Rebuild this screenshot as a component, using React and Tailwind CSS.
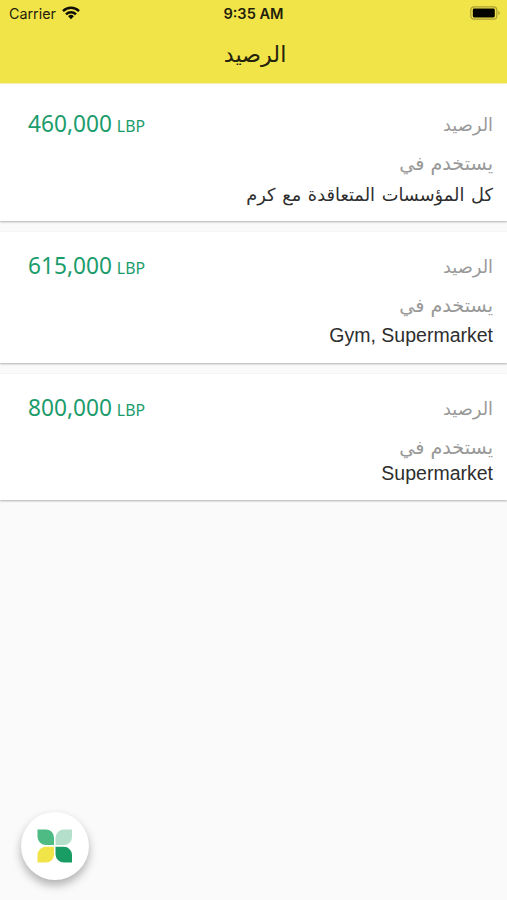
import React from 'react'

const balances = [
  {
    amount: '460,000',
    places: 'كل المؤسسات المتعاقدة مع كرم',
    card: 'h-[137px] pt-[21px]',
    text: "h-[30px] text-[17.8px] [word-spacing:1px] font-['DejaVu_Sans','Noto_Sans',sans-serif]",
  },
  {
    amount: '615,000',
    places: 'Gym, Supermarket',
    card: 'h-[131px] pt-[15px]',
    text: "h-[26px] pt-[2px] text-[19.5px] font-['Liberation_Sans',sans-serif]",
  },
  {
    amount: '800,000',
    places: 'Supermarket',
    card: 'h-[126px] pt-[15px]',
    text: "h-[18px] pt-[2px] text-[19.5px] font-['Liberation_Sans',sans-serif]",
  },
]

function StatusBar() {
  return (
    <div className="grid h-7 grid-cols-3 items-center pl-[9px] pr-[7px] font-['Inter',sans-serif] text-[14.3px] leading-none text-[#1f1e0c]">
      <div className="flex items-center gap-[6px]">
        <span>Carrier</span>
        <svg width="18" height="14" viewBox="0 0 18 14" fill="none" stroke="#111006" strokeWidth="2.5" className="-mt-[2px]">
          <path d="M1 5.1a11.5 11.5 0 0 1 16 0" />
          <path d="M4 8.3a7.2 7.2 0 0 1 10 0" />
          <path d="M9 13.2 6.1 10.3a4.1 4.1 0 0 1 5.8 0z" fill="#111006" stroke="none" />
        </svg>
      </div>
      <span className="pr-[2px] text-center text-[14.6px] font-semibold">9:35 AM</span>
      <div className="flex justify-end">
        <svg width="30" height="14" viewBox="0 0 30 14" className="-mt-[2px]">
          <rect x="0.8" y="0.8" width="26" height="12.4" rx="3.2" fill="none" stroke="#a89f34" strokeWidth="1.2" />
          <rect x="2.8" y="2.6" width="22" height="8.8" rx="1.4" fill="#050500" />
          <path d="M28.3 4.8c1.8.8 1.8 3.6 0 4.4z" fill="#a89f34" />
        </svg>
      </div>
    </div>
  )
}

function BalanceCard({ item }) {
  return (
    <div className={`${item.card} bg-white pl-7 pr-[14px] shadow-[0_1px_2px_rgba(0,0,0,0.3)]`}>
      <div className="flex h-10 items-center justify-between">
        <p dir="ltr" className="font-['Noto_Sans',sans-serif] text-[22.7px] leading-10 text-[#1b9c6b]">
          {item.amount} <span className="-ml-[1px] text-[15.8px]">LBP</span>
        </p>
        <h3 className="font-['DejaVu_Sans',sans-serif] text-[17.8px] leading-10 text-[#999999]">الرصيد</h3>
      </div>
      <h3 dir="rtl" className="mt-[4px] mb-[1px] h-[30px] font-['DejaVu_Sans',sans-serif] text-[19.2px] leading-[30px] text-[#999999]">
        يستخدم في
      </h3>
      <div className={`${item.text} flex items-center justify-end whitespace-nowrap leading-none text-[#2e2e2e]`}>
        <span dir="auto">{item.places}</span>
      </div>
    </div>
  )
}

function App() {
  return (
    <div className="relative h-screen overflow-hidden bg-[#fafafa]">
      <header className="h-[84px] border-b border-[#f8f3b0] bg-[#f1e448]">
        <StatusBar />
        <h1 dir="rtl" className="pl-[3px] text-center font-['DejaVu_Sans',sans-serif] text-[22.3px] leading-[53px] text-[#24220c]">
          الرصيد
        </h1>
      </header>

      <main className="flex flex-col gap-[11px]">
        {balances.map((item) => (
          <BalanceCard key={item.amount} item={item} />
        ))}
      </main>

      <button className="absolute bottom-[20px] left-[21px] flex size-[68px] items-center justify-center rounded-full bg-white shadow-[0_5px_10px_rgba(0,0,0,0.3)]">
        <svg width="36" height="34" viewBox="0 0 36 34">
          <path d="M0.5 0.5H9a8 8 0 0 1 8 8V16H9a8.5 8.5 0 0 1-8.5-8z" fill="#4dbb83" />
          <path d="M35 0.5H27a8.5 8.5 0 0 0-8.5 8V16H27a8 8 0 0 0 8-8z" fill="#b4dfcb" />
          <path d="M0.5 33.5H9a8 8 0 0 0 8-8V17.8H9a8.5 8.5 0 0 0-8.5 8z" fill="#f1e448" />
          <path d="M35 33.5H27a8.5 8.5 0 0 1-8.5-8V17.8H27a8 8 0 0 1 8 8z" fill="#199d65" />
        </svg>
      </button>
    </div>
  )
}

export default App
